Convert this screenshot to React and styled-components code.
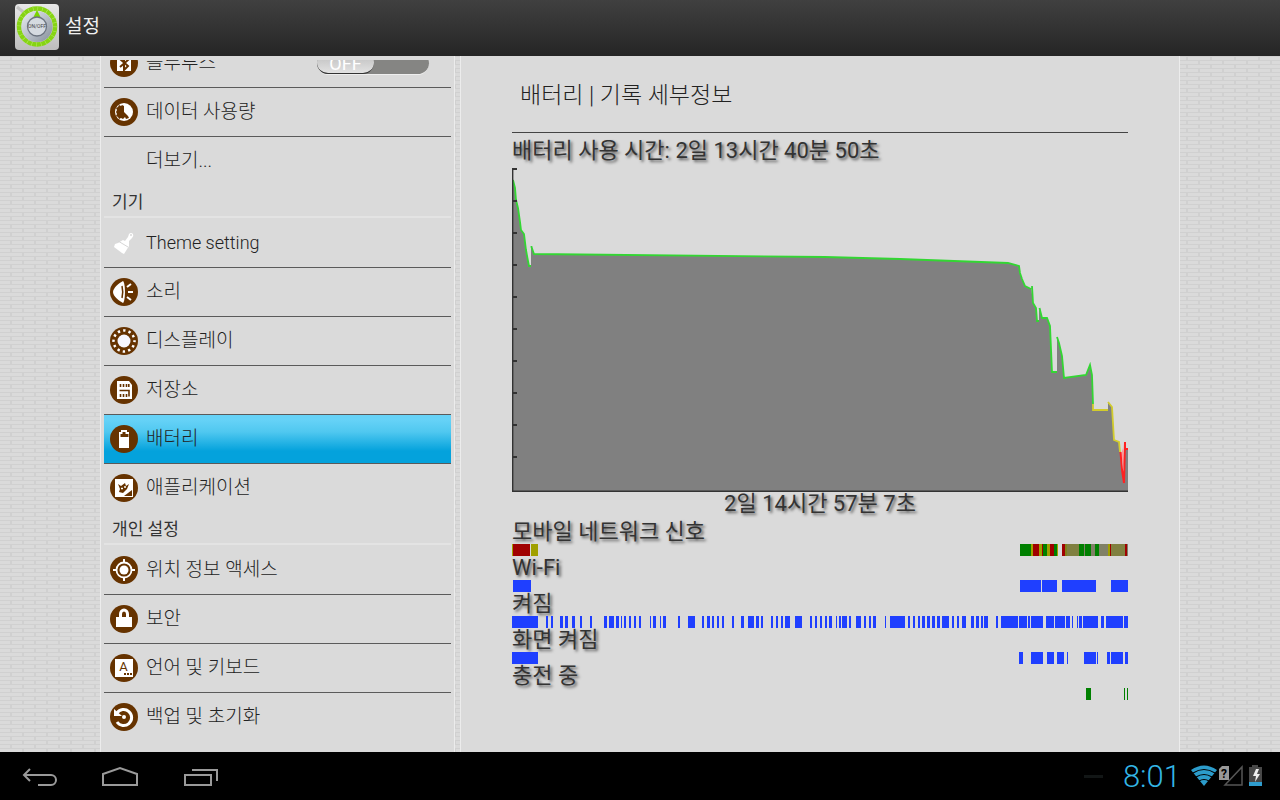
import React, { useState } from "react";
import styled, { createGlobalStyle } from "styled-components";

const GlobalStyle = createGlobalStyle`
  * {
    box-sizing: border-box;
  }

  body {
    margin: 0;
    background: #000;
    color: #333;
    font-family: Roboto, "Noto Sans CJK KR", sans-serif;
  }
`;

const Page = styled.div`
  display: flex;
  flex-direction: column;
  min-height: 100vh;
`;

const TitleBar = styled.header`
  display: flex;
  align-items: center;
  gap: 6px;
  height: 56px;
  padding: 0 15px 2px;
  background: linear-gradient(#404040, #252525);
`;

const AppTitle = styled.h1`
  margin: 0;
  font-size: 19px;
  line-height: 24px;
  font-weight: 400;
  color: #f0f0f0;
`;

const Body = styled.div`
  flex: 1;
  display: flex;
  gap: 5px;
  padding: 0 100px;
  background-color: #dadada;
  background-image:
    conic-gradient(from 270deg at 2px 4px, #d0d0d0 90deg, transparent 90deg),
    conic-gradient(from 270deg at 2px 4px, #d0d0d0 90deg, transparent 90deg),
    linear-gradient(#d0d0d0 1px, transparent 1px);
  background-size: 24px 8px, 24px 8px, 24px 4px;
  background-position: 10px 0, 22px 4px, 0 0;
`;

const Sidebar = styled.nav`
  width: 355px;
  padding: 4px 3px 0;
  background: #dadada;
  border-left: 1px solid #ececec;
  border-right: 1px solid #ececec;
`;

const ListViewport = styled.div`
  overflow: hidden;
`;

/* the list is scrolled a little, so its first row is cut at the top */
const List = styled.ul`
  list-style: none;
  margin: -21px 0 0;
  padding: 0;
`;

const Row = styled.li`
  display: flex;
  align-items: center;
  height: ${(props) => (props.$last ? 48 : 49)}px;
  padding: 0 22px 0 6px;
  border-bottom: ${(props) => (props.$last ? "none" : "1px solid #5a5a5a")};
  background: ${(props) =>
    props.$active ? "linear-gradient(#66d2f7 10%, #50c8f0 35%, #04a2dc 75%, #04a2dc)" : "none"};
`;

const RowLink = styled.a`
  flex: 1;
  display: flex;
  align-items: center;
  gap: 8px;
  color: #222;
  line-height: 24px;
  text-decoration: none;
`;

const RowText = styled.span`
  font-size: ${(props) => (props.$latin ? 18 : 19)}px;
  font-weight: 300;
`;

const IconBox = styled.svg`
  width: 28px;
  height: 28px;
  flex: none;
  display: block;
`;

const SectionTitle = styled.li`
  height: 33px;
  margin-bottom: 1px;
  padding: 5px 8px 0;
  border-bottom: 2px solid #e3e3e3;
  font-size: 17px;
  line-height: 24px;
`;

const Toggle = styled.button`
  width: 112px;
  height: 23px;
  padding: 0;
  border: none;
  border-bottom: 1px solid #eee;
  border-radius: 12px;
  background: #858583;
  text-align: left;
`;

const Knob = styled.span`
  display: block;
  width: 57px;
  height: 22px;
  border-radius: 12px;
  border-bottom: 1px solid #333;
  background: linear-gradient(#bbb, #e2e2e2);
  color: #fff;
  font-family: Roboto, sans-serif;
  font-size: 18px;
  line-height: 24px;
  text-align: center;
`;

const Content = styled.main`
  flex: 1;
  min-width: 0;
  padding: 0 51px;
  background: #dadada;
  border-left: 1px solid #ececec;
  border-right: 1px solid #ececec;
`;

const PageTitle = styled.h2`
  margin: 0;
  height: 77px;
  padding: 25px 8px 0;
  border-bottom: 1px solid #444;
  color: #222;
  font-size: 23px;
  line-height: 30px;
  font-weight: 300;
`;

const UsageLabel = styled.div`
  height: 35px;
  padding-top: 6px;
  font-size: 22px;
  line-height: 24px;
  text-shadow: 2px 2px 3px rgba(0, 0, 0, 0.6);
`;

const AxisLabel = styled.div`
  height: 25px;
  font-size: 22px;
  line-height: 22px;
  text-align: center;
  text-shadow: 2px 2px 3px rgba(0, 0, 0, 0.6);
`;

const Chart = styled.svg`
  display: block;
  width: 100%;
  height: 325px;
`;

const History = styled.section`
  padding-top: 2px;
`;

const HistoryTitle = styled.h3`
  margin: 0;
  font-size: 22px;
  line-height: 24px;
  font-weight: 400;
  text-shadow: 2px 2px 3px rgba(0, 0, 0, 0.6);
`;

const Bars = styled.svg`
  display: block;
  width: 100%;
  height: 12px;
  margin-bottom: -2px;
`;

const SystemBar = styled.footer`
  display: flex;
  align-items: center;
  justify-content: space-between;
  height: 48px;
  padding: 0 16px;
  background: #000;
`;

const NavGroup = styled.div`
  display: flex;
  gap: 32px;
`;

const NavButton = styled.button`
  width: 48px;
  height: 48px;
  padding: 0;
  border: none;
  background: none;
`;

const NavIcon = styled.svg`
  display: block;
  width: 48px;
  height: 48px;
  fill: none;
  stroke: #9a9a9a;
  stroke-width: 2;
`;

const Status = styled.div`
  display: flex;
  align-items: center;
`;

const Dash = styled.span`
  width: 19px;
  height: 3px;
  margin-right: 20px;
  background: #121616;
`;

const Clock = styled.time`
  padding-top: 2px;
  margin-right: 10px;
  color: #33b5e5;
  font-size: 31px;
  line-height: 46px;
  font-weight: 300;
`;

const StatusIcons = styled.svg`
  display: block;
  width: 73px;
  height: 24px;
`;

const BROWN = "#663300";

const shapes = {
  bluetooth: (
    <>
      <path d="M7 5h14v17H7z" fill="#fff" />
      <path d="M10 10l8 7-4 4V7l4 4-8 7" fill="none" stroke={BROWN} strokeWidth="2" />
    </>
  ),
  data: (
    <>
      <circle cx="14" cy="14" r="9" fill="#fff" />
      <path
        d="M12 7l2 1v6l4 4 1 2-3 1-1-2-2 2-2-1-2 1-1-2-2-1 1-2-1-2 1-2-1-2 2-1 1-2 2 1z"
        fill={BROWN}
      />
    </>
  ),
  sound: (
    <>
      <path d="M13 3c2.600 2 2.600 20 0 22C9 23 3 18 3 14S9 5 13 3z" fill="#fff" />
      <path d="M12 8q1.500 6 0 12" fill="none" stroke={BROWN} strokeWidth="1.500" />
      <path d="M17 9l4-3M18 14h5M17 19l4 3" stroke="#fff" strokeWidth="2" />
    </>
  ),
  display: (
    <>
      <circle cx="14" cy="14" r="6.500" fill="#f7f7ff" />
      <circle
        cx="14"
        cy="14"
        r="10.500"
        fill="none"
        stroke="#fff"
        strokeWidth="2.500"
        strokeDasharray="2.400 3.098"
        strokeDashoffset="1.200"
      />
    </>
  ),
  storage: (
    <>
      <path d="M7 5h12l3 4v14H7z" fill="#fff" />
      <path
        d="M10.500 8v3M13.500 8v3M16.500 8v3M18.800 8v3M10.500 18v3M13.500 18v3M16.500 18v3M9.500 14.500h9.500v6"
        fill="none"
        stroke={BROWN}
        strokeWidth="1.600"
      />
    </>
  ),
  battery: (
    <>
      <path d="M11 5h6v2h2v16H9V7h2z" fill="#fff" />
      <path d="M12.500 7h3v2h3v3h-8V9h2z" fill={BROWN} />
    </>
  ),
  apps: (
    <>
      <path d="M5 5h18v18H5z" fill="#fff" />
      <path d="M22 16v6h-8z" fill={BROWN} />
      <path d="M8 10l3 2 4-3 1 3 3-2-2 5-4 4-4-1 1-3z" fill={BROWN} />
      <path d="M11 14.500h2M15 12v2" stroke="#fff" strokeWidth="1.500" />
    </>
  ),
  location: (
    <>
      <circle cx="14" cy="14" r="4.500" fill="#fff" />
      <circle cx="14" cy="14" r="7.500" fill="none" stroke="#fff" strokeWidth="1.800" />
      <path d="M14 3v4M14 21v4M3 14h4M21 14h4" stroke="#fff" strokeWidth="2" />
    </>
  ),
  lock: (
    <>
      <path d="M6 12h16v10H6z" fill="#fff" />
      <path d="M10.500 13V9a3.500 4 0 0 1 7 0v4" fill="none" stroke="#fff" strokeWidth="3" />
    </>
  ),
  language: (
    <>
      <path d="M5 5h18v18H5z" fill="#fff" />
      <text x="13.500" y="17" textAnchor="middle" fontSize="13" fontFamily="Roboto, sans-serif" fill={BROWN}>
        A
      </text>
      <path d="M14 20h8" stroke={BROWN} strokeWidth="2" strokeDasharray="2 1" />
    </>
  ),
  backup: (
    <>
      <path d="M7 10a8 8 0 1 1 0 9" fill="none" stroke="#fff" strokeWidth="3" />
      <path d="M4 6v7h8z" fill="#fff" />
      <circle cx="14" cy="14" r="2" fill="#fff" />
    </>
  ),
};

const RowIcon = ({ name }) => {
  if (name === "theme") {
    return (
      <IconBox viewBox="0 0 28 28" aria-hidden="true">
        <path d="M18 8l1-3q2-2 4 0 1 2-1 4l-3 3v5l-5 8-2-1-8-6 1-3 3-1 5-3 2 1z" fill="#fff" />
        <path d="M8 12l10 6" stroke="#d6d6d6" />
        <circle cx="21" cy="6" r="1" fill="#dadada" />
      </IconBox>
    );
  }
  return (
    <IconBox viewBox="0 0 28 28" aria-hidden="true">
      {name && <circle cx="14" cy="14" r="14" fill={BROWN} />}
      {shapes[name]}
    </IconBox>
  );
};

const DialLogo = () => (
  <svg width="44" height="46" viewBox="0 0 44 46" aria-hidden="true">
    <defs>
      <linearGradient id="plate" x1="0" y1="0" x2="0" y2="1">
        <stop offset="0" stopColor="#e8e8e8" />
        <stop offset="1" stopColor="#bdbdbd" />
      </linearGradient>
      <linearGradient id="dial" x1="0" y1="0" x2="1" y2="1">
        <stop offset="0" stopColor="#e9edf2" />
        <stop offset="0.5" stopColor="#b9c0c9" />
        <stop offset="1" stopColor="#848d98" />
      </linearGradient>
    </defs>
    <rect width="44" height="46" rx="4" fill="url(#plate)" />
    <path d="M2 3l10 8" stroke="#c4c4c4" strokeWidth="3" />
    <circle cx="22" cy="22.500" r="18" fill="none" stroke="#86d414" strokeWidth="4.500" />
    <circle cx="22" cy="22.500" r="18" fill="none" stroke="#b4e860" strokeWidth="4.500" strokeDasharray="0.600 4.112" />
    <circle cx="22" cy="22.500" r="15.500" fill="url(#dial)" />
    <path d="M22 6l3.500 7h-7z" fill="#7ad400" />
    <circle cx="22" cy="22.500" r="9.500" fill="#d5dae0" stroke="#6c7480" strokeWidth="1.300" />
    <text x="22" y="24" textAnchor="middle" fontSize="5" fontFamily="Roboto, sans-serif" fill="#444">
      ON/OFF
    </text>
  </svg>
);

const settings = [
  { icon: "bluetooth", text: "블루투스", toggle: true },
  { icon: "data", text: "데이터 사용량" },
  { text: "더보기...", last: true },
  { section: "기기" },
  { icon: "theme", text: "Theme setting", latin: true },
  { icon: "sound", text: "소리" },
  { icon: "display", text: "디스플레이" },
  { icon: "storage", text: "저장소" },
  { icon: "battery", text: "배터리", active: true },
  { icon: "apps", text: "애플리케이션", last: true },
  { section: "개인 설정" },
  { icon: "location", text: "위치 정보 액세스" },
  { icon: "lock", text: "보안" },
  { icon: "language", text: "언어 및 키보드" },
  { icon: "backup", text: "백업 및 초기화", last: true },
];

const BLUE = "#1f3fff";
const GREEN = "#008000";
const RED = "#a00000";
const OLIVE = "#a0a000";
const MOSS = "#808040";
const DUSK = "#808066";

// every bar is [start, end, color?] on a 616 unit time axis
const histories = [
  {
    title: "모바일 네트워크 신호",
    bars: [
      [0, 1, OLIVE], [1, 18, RED], [19, 26, OLIVE],
      [508, 519, GREEN], [519, 521, OLIVE], [521, 527, RED], [527, 530, OLIVE],
      [530, 531, RED], [531, 535, GREEN], [535, 538, OLIVE], [538, 542, RED],
      [542, 545, GREEN], [545, 546, OLIVE], [550, 553, RED], [553, 555, "#80801a"],
      [555, 567, MOSS], [567, 572, GREEN], [572, 573, DUSK], [573, 579, GREEN],
      [579, 583, DUSK], [583, 587, GREEN], [587, 596, DUSK], [596, 598, OLIVE],
      [598, 599, RED], [599, 613, MOSS], [613, 615, RED], [615, 616, DUSK],
    ],
  },
  {
    title: "Wi-Fi",
    bars: [[1, 19], [508, 529], [530, 545], [550, 584], [599, 616]],
  },
  {
    title: "켜짐",
    bars: [
      [0, 26], [34, 36], [39, 41], [48, 51], [53, 56], [60, 63], [68, 70], [78, 80],
      [92, 95], [97, 102], [104, 107], [109, 110], [112, 114], [117, 119], [122, 124],
      [127, 129], [138, 139], [141, 144], [148, 149], [151, 154], [166, 168], [176, 183],
      [190, 192], [195, 198], [200, 202], [205, 207], [210, 212], [220, 222], [229, 232],
      [236, 242], [244, 247], [249, 251], [259, 261], [264, 266], [269, 271], [273, 278],
      [283, 290], [298, 300], [303, 305], [308, 310], [313, 315], [317, 320], [324, 325],
      [327, 329], [330, 335], [337, 339], [344, 349], [352, 354], [357, 359], [361, 364],
      [373, 374], [378, 393], [396, 398], [401, 403], [406, 408], [410, 413], [415, 418],
      [420, 423], [425, 428], [430, 437], [440, 442], [445, 447], [450, 454], [459, 462],
      [464, 467], [469, 471], [472, 476], [484, 486], [489, 506], [507, 515], [516, 518],
      [519, 531], [534, 542], [543, 553], [554, 558], [560, 561], [565, 566], [567, 570],
      [571, 586], [589, 592], [594, 611], [612, 616],
    ],
  },
  {
    title: "화면 켜짐",
    bars: [
      [0, 26], [507, 511], [519, 531], [535, 542], [545, 552], [555, 556],
      [572, 584], [585, 586], [595, 598], [599, 611], [613, 616],
    ],
  },
  {
    title: "충전 중",
    bars: [[574, 579, GREEN], [612, 613, GREEN], [615, 616, GREEN]],
  },
];

const ticks = [1, 33, 65, 97, 129, 161, 193, 225, 257, 289];

const BatteryChart = () => (
  <Chart viewBox="0 0 616 325" preserveAspectRatio="none" role="img" aria-label="배터리">
    <path
      d="M1 12L3 20L4 32L6 40L8 54L9 62L12 66L14 82L16 93L17 98H19V78L20 79L22 86L313 89L388 91L496 95L507 98L508 105L510 111L513 118L519 121V118L521 135L524 140L525 153H527V143L528 140L530 150H535L538 158L540 204H545V169L547 175L550 188L552 210L574 207L578 197L580 207L581 242H596V234L600 239L602 272L607 274L612 316L613 281H616V323H1Z"
      fill="#808080"
    />
    <g fill="none" strokeWidth="1.800">
      <path
        d="M1 12L3 20L4 32L6 40L8 54L9 62L12 66L14 82L16 93L17 98H19M19.500 78V79L22 86L313 89L388 91L496 95L507 98L508 105L510 111L513 118L519 121M520 118L521 135L524 140L525 153H527M527.500 140L530 150H535L538 158L540 204H545M545 169L547 175L550 188L552 210L574 207L578 197L580 207L581 236"
        stroke="#33d633"
      />
      <path d="M581 236V242H596M596 234L600 239L602 272L607 274L608 284" stroke="#d2cc2c" />
      <path d="M609 286L611 280L612 300Z" fill="#f99" />
      <path d="M608.500 284L610 302L612 315L613 274V281H616" stroke="#f22" strokeWidth="2" />
    </g>
    <path d="M0 0h1.400v324H0z" fill="#333" />
    {ticks.map((y) => (
      <path key={y} d={`M1 ${y}h4`} stroke="#333" strokeWidth="2" />
    ))}
    <path d="M0 323.300H616" stroke="#333" strokeWidth="1.600" />
  </Chart>
);

const App = () => {
  const [bluetooth, setBluetooth] = useState(false);

  return (
    <Page>
      <GlobalStyle />
      <TitleBar>
        <DialLogo />
        <AppTitle>설정</AppTitle>
      </TitleBar>

      <Body>
        <Sidebar>
          <ListViewport>
            <List>
              {settings.map((item) =>
                item.section ? (
                  <SectionTitle key={item.section}>{item.section}</SectionTitle>
                ) : (
                  <Row key={item.text} $active={item.active} $last={item.last}>
                    <RowLink href="#">
                      <RowIcon name={item.icon} />
                      <RowText $latin={item.latin}>{item.text}</RowText>
                    </RowLink>
                    {item.toggle && (
                      <Toggle
                        role="switch"
                        aria-checked={bluetooth}
                        aria-label={item.text}
                        onClick={() => setBluetooth(!bluetooth)}
                      >
                        <Knob>{bluetooth ? "ON" : "OFF"}</Knob>
                      </Toggle>
                    )}
                  </Row>
                )
              )}
            </List>
          </ListViewport>
        </Sidebar>

        <Content>
          <PageTitle>배터리 | 기록 세부정보</PageTitle>
          <UsageLabel>배터리 사용 시간: 2일 13시간 40분 50초</UsageLabel>
          <BatteryChart />
          <AxisLabel>2일 14시간 57분 7초</AxisLabel>
          {histories.map((history) => (
            <History key={history.title}>
              <HistoryTitle>{history.title}</HistoryTitle>
              <Bars viewBox="0 0 616 12" preserveAspectRatio="none" aria-hidden="true">
                {history.bars.map(([start, end, color = BLUE]) => (
                  <rect key={start} x={start} width={end - start} height="12" fill={color} />
                ))}
              </Bars>
            </History>
          ))}
        </Content>
      </Body>

      <SystemBar>
        <NavGroup>
          <NavButton aria-label="뒤로">
            <NavIcon viewBox="0 0 48 48">
              <path d="M22 33h13a5 5 0 0 0 0-10H9M14 17l-6 6 6 6" />
            </NavIcon>
          </NavButton>
          <NavButton aria-label="홈">
            <NavIcon viewBox="0 0 48 48">
              <path d="M7 33V22l17-6 17 6v11z" />
            </NavIcon>
          </NavButton>
          <NavButton aria-label="최근 앱">
            <NavIcon viewBox="0 0 48 48">
              <path d="M9 23h26v10H9zM16 18h25v11" />
            </NavIcon>
          </NavButton>
        </NavGroup>
        <Status>
          <Dash />
          <Clock>8:01</Clock>
          <StatusIcons viewBox="0 0 73 24" aria-hidden="true">
            <path d="M0 6Q13-3 26 6L13 22z" fill="#2c9ccb" />
            <path d="M2 9q11-7 22 0M5 13q8-5 16 0M8 17q5-3 10 0" fill="none" stroke="#000" strokeWidth="1.200" />
            <path d="M31 2h7v14H28V5z" fill="#999" />
            <text x="33" y="14" textAnchor="middle" fontSize="12" fontWeight="700" fontFamily="Roboto, sans-serif" fill="#000">
              ?
            </text>
            <path d="M51 3v18H34z" fill="none" stroke="#555" strokeWidth="1.500" />
            <path d="M61 1h6v2h4v16H58V3h3z" fill="#484848" />
            <path d="M58 18h13v4H58z" fill="#2f9dce" />
            <path d="M65 5l-3 7h3l-1 6 5-8h-3l2-5z" fill="#eee" />
          </StatusIcons>
        </Status>
      </SystemBar>
    </Page>
  );
};

export default App;
